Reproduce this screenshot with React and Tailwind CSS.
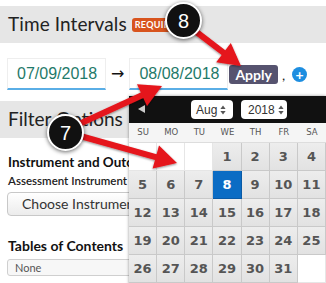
import React from "react"

const weeks = [
    [null, null, null, 1, 2, 3, 4],
    [5, 6, 7, 8, 9, 10, 11],
    [12, 13, 14, 15, 16, 17, 18],
    [19, 20, 21, 22, 23, 24, 25],
    [26, 27, 28, 29, 30, 31, null],
]

// build a polygon for a fat callout arrow
function arrowPoints(x1, y1, x2, y2, shaft = 3, headLen = 22, headHalf = 12) {
    const dx = x2 - x1
    const dy = y2 - y1
    const len = Math.hypot(dx, dy)
    const ux = dx / len
    const uy = dy / len
    const nx = -uy
    const ny = ux
    const bx = x2 - ux * headLen
    const by = y2 - uy * headLen
    const p = [
        [x1 + nx * shaft, y1 + ny * shaft],
        [bx + nx * shaft, by + ny * shaft],
        [bx + nx * headHalf, by + ny * headHalf],
        [x2, y2],
        [bx - nx * headHalf, by - ny * headHalf],
        [bx - nx * shaft, by - ny * shaft],
        [x1 - nx * shaft, y1 - ny * shaft],
    ]
    return p.map(([x, y]) => `${x.toFixed(1)},${y.toFixed(1)}`).join(" ")
}

function SpinArrows() {
    return (
        <svg width="6" height="10" viewBox="0 0 6 10" className="ml-[3px]">
            <path d="M3 0.5 L5.6 4 L0.4 4 Z" fill="#555" />
            <path d="M3 9.5 L5.6 6 L0.4 6 Z" fill="#555" />
        </svg>
    )
}

function Callout({ n, className }) {
    return (
        <div
            className={`absolute w-[37px] h-[37px] rounded-full bg-[#111] border-[2px] border-white shadow-[0_1px_4px_rgba(0,0,0,0.6)] flex items-center justify-center text-white text-[20px] font-['Liberation_Sans',sans-serif] ${className}`}
        >
            {n}
        </div>
    )
}

export default function App() {
    return (
        <div className="relative w-[326px] h-[283px] overflow-hidden bg-white font-['Lato',sans-serif]">
            <div className="h-[6px]" />
            <header className="h-[37px] bg-[#e6e6e6] flex items-center pl-[8px]">
                <span className="text-[19px] text-[#222] tracking-[0.1px]">Time Intervals</span>
                <span className="ml-[5px] bg-[#d8541e] text-white text-[9px] font-bold rounded-[3px] px-[3px] leading-[14px] tracking-[0.3px]">
                    REQUIRED
                </span>
            </header>

            <div className="flex items-center pl-[7px] mt-[15px] h-[32px]">
                <div className="w-[99px] h-[32px] border border-[#eee] border-b-[2px] border-b-[#5aaee6] border-b-dotted flex items-center pl-[9px] text-[16px] text-[#1f7a6a] font-['Liberation_Sans',sans-serif]">
                    07/09/2018
                </div>
                <span className="mx-[5px] text-[16px] text-[#111] font-['DejaVu_Sans',sans-serif]">→</span>
                <div className="w-[99px] h-[32px] border border-[#eee] border-b-[2px] border-b-[#5aaee6] border-b-dotted flex items-center pl-[9px] text-[16px] text-[#1f7a6a] font-['Liberation_Sans',sans-serif]">
                    08/08/2018
                </div>
                <button className="ml-[1px] h-[19px] px-[6px] rounded-[3px] bg-[#56536f] text-white text-[14px] font-bold leading-[19px]">
                    Apply
                </button>
                <span className="ml-[4px] text-[14px] text-[#222]">,</span>
                <span className="ml-[7px] w-[15px] h-[15px] rounded-full bg-[#1e8ee0] text-white text-[14px] font-bold leading-[15px] flex items-center justify-center">
                    +
                </span>
            </div>

            <div className="mt-[11px] h-[37px] bg-[#e6e6e6] flex items-center pl-[8px]">
                <span className="text-[19px] text-[#222]">Filter Options</span>
            </div>

            <div className="pl-[8px] pt-[15px]">
                <div className="text-[13.5px] font-bold text-[#111] leading-[18px] whitespace-nowrap">Instrument and Outcomes</div>
                <div className="mt-[2px] text-[11.5px] font-semibold text-[#222] leading-[16px] whitespace-nowrap">Assessment Instrument</div>
                <div className="mt-[3px] ml-[-1px] w-[150px] h-[24px] rounded-[4px] border border-[#c8c8c8] bg-gradient-to-b from-white to-[#ececec] text-[14px] text-[#333] pl-[14px] leading-[21px] whitespace-nowrap">
                    Choose Instrument
                </div>
                <div className="mt-[21px] text-[14px] font-bold text-[#111] leading-[18px]">Tables of Contents</div>
                <div className="mt-[4px] ml-[-1px] w-[150px] h-[17px] rounded-[3px] border border-[#cfcfcf] bg-[#f7f7f7] text-[11px] text-[#555] pl-[7px] leading-[15px]">
                    None
                </div>
            </div>

            {/* date picker popup */}
            <div className="absolute left-[129px] top-[96px] w-[197px] bg-white shadow-[0_0_3px_rgba(0,0,0,0.4)]">
                <div className="h-[27px] bg-[#111] flex items-center relative">
                    <span className="absolute left-[9px] top-[9px] w-0 h-0 border-y-[4px] border-y-transparent border-r-[7px] border-r-[#ccc]" />
                    <div className="ml-[62px] h-[19px] w-[42px] rounded-[4px] bg-white flex items-center pl-[5px] text-[12px] text-[#333] font-['Liberation_Sans',sans-serif]">
                        Aug
                        <SpinArrows />
                    </div>
                    <div className="ml-[8px] h-[19px] w-[46px] rounded-[4px] bg-white flex items-center pl-[7px] text-[12px] text-[#333] font-['Liberation_Sans',sans-serif]">
                        2018
                        <SpinArrows />
                    </div>
                </div>
                <div className="grid grid-cols-7 h-[19px] bg-[#f5f5f5] text-[8.5px] text-[#555] font-['DejaVu_Sans',sans-serif]">
                    {["SU", "MO", "TU", "WE", "TH", "FR", "SA"].map((d) => (
                        <div key={d} className="flex items-center justify-center">{d}</div>
                    ))}
                </div>
                <div className="grid grid-cols-7 border-t border-[#ddd]">
                    {weeks.flat().map((d, i) =>
                        d === null ? (
                            <div key={i} className="h-[28px] bg-white border-r border-b border-[#e6e6e6]" />
                        ) : d === 8 ? (
                            <div key={i} className="h-[28px] bg-[#0b6cc4] border-r border-b border-[#0a5aa5] flex items-center justify-center text-[13px] font-bold text-white font-['DejaVu_Sans',sans-serif]">
                                {d}
                            </div>
                        ) : (
                            <div key={i} className="h-[28px] bg-gradient-to-b from-[#ededed] to-[#e2e2e2] border-r border-b border-[#c9c9c9] flex items-center justify-center text-[13px] font-bold text-[#555] font-['DejaVu_Sans',sans-serif]">
                                {d}
                            </div>
                        )
                    )}
                </div>
                <div className="h-[4px] bg-[#111]" />
            </div>

            {/* red callout arrows */}
            <svg className="absolute inset-0 pointer-events-none" width="326" height="283">
                <defs>
                    <filter id="sh" x="-20%" y="-20%" width="140%" height="140%">
                        <feDropShadow dx="0" dy="1" stdDeviation="1.2" floodColor="#000" floodOpacity="0.45" />
                    </filter>
                </defs>
                <g fill="#e5141b" filter="url(#sh)">
                    <polygon points={arrowPoints(186, 24, 241, 66)} />
                    <polygon points={arrowPoints(66, 130, 162, 86)} />
                    <polygon points={arrowPoints(66, 132, 177, 163)} />
                </g>
            </svg>

            <Callout n="8" className="left-[165px] top-[2px]" />
            <Callout n="7" className="left-[47px] top-[114px]" />
        </div>
    )
}
